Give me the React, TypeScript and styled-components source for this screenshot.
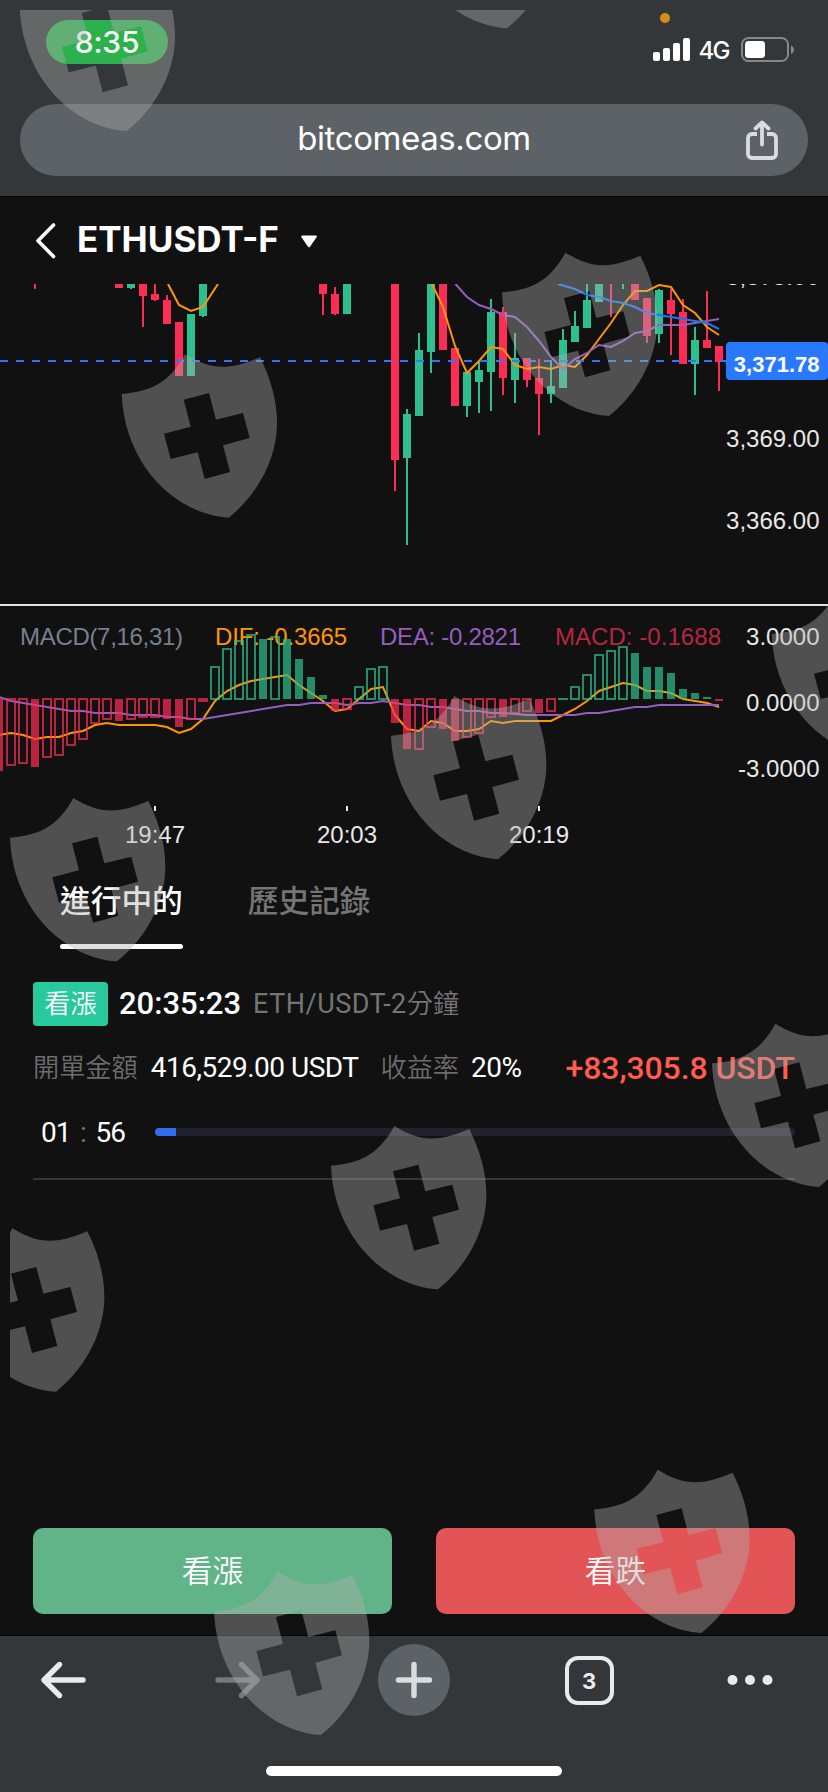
import React from 'react';
import styled, { createGlobalStyle } from 'styled-components';

type Candle = {
  x: number;
  up?: boolean;
  wick?: [number, number];
  body?: [number, number];
};

type Bar = [x: number, up: 0 | 1, hollow: 0 | 1, end: number];

type TextProps = {
  $size?: number;
  $weight?: number;
  $color?: string;
  $spacing?: number;
  $ml?: number;
};

const UP = '#2dc08e';
const DOWN = '#ff2d55';

// top of the visible price pane
const TOP = 284;
const ZERO = 699;

const candles: Candle[] = [
  { x: 35, wick: [TOP, 289] },
  { x: 119, body: [TOP, 288] },
  { x: 131, up: true, wick: [TOP, 289], body: [TOP, 288] },
  { x: 143, wick: [TOP, 327], body: [TOP, 296] },
  { x: 155, wick: [TOP, 301], body: [294, 300] },
  { x: 167, wick: [295, 324], body: [300, 324] },
  { x: 179, body: [322, 376] },
  { x: 191, up: true, body: [314, 376] },
  { x: 203, up: true, wick: [TOP, 317], body: [TOP, 316] },
  { x: 323, wick: [TOP, 315], body: [TOP, 294] },
  { x: 335, wick: [287, 315], body: [294, 314] },
  { x: 347, up: true, body: [TOP, 314] },
  { x: 395, wick: [TOP, 491], body: [TOP, 460] },
  { x: 407, up: true, wick: [409, 545], body: [414, 458] },
  { x: 419, up: true, wick: [333, 416], body: [350, 416] },
  { x: 431, up: true, wick: [TOP, 373], body: [TOP, 352] },
  { x: 443, body: [TOP, 350] },
  { x: 455, body: [348, 406] },
  { x: 467, up: true, wick: [372, 417], body: [372, 406] },
  { x: 479, up: true, wick: [362, 413], body: [370, 382] },
  { x: 491, up: true, wick: [299, 411], body: [312, 372] },
  { x: 503, wick: [307, 395], body: [312, 378] },
  { x: 515, up: true, wick: [333, 403], body: [358, 380] },
  { x: 527, wick: [358, 387], body: [358, 380] },
  { x: 539, wick: [359, 435], body: [378, 394] },
  { x: 551, up: true, wick: [361, 403], body: [386, 394] },
  { x: 563, up: true, wick: [329, 388], body: [340, 388] },
  { x: 575, up: true, wick: [311, 342], body: [326, 342] },
  { x: 587, up: true, wick: [TOP, 328], body: [300, 328] },
  { x: 599, up: true, body: [TOP, 302] },
  { x: 611, wick: [TOP, 317] },
  { x: 623, up: true, wick: [TOP, 289] },
  { x: 635, body: [TOP, 300] },
  { x: 647, wick: [298, 343], body: [298, 336] },
  { x: 659, up: true, wick: [289, 343], body: [290, 334] },
  { x: 671, wick: [289, 355], body: [300, 314] },
  { x: 683, wick: [299, 364], body: [312, 364] },
  { x: 695, up: true, wick: [327, 395], body: [340, 364] },
  { x: 707, wick: [291, 348], body: [340, 348] },
  { x: 719, wick: [346, 391], body: [346, 362] },
];

const bars: Bar[] = [
  [-1, 0, 0, 771], [11, 0, 1, 766], [23, 0, 1, 764], [35, 0, 0, 767],
  [47, 0, 1, 758], [59, 0, 1, 756], [71, 0, 1, 746], [83, 0, 1, 740],
  [95, 0, 1, 724], [107, 0, 1, 720], [119, 0, 0, 721], [131, 0, 1, 720],
  [143, 0, 1, 718], [155, 0, 1, 718], [167, 0, 0, 719], [179, 0, 0, 727],
  [191, 0, 1, 720], [203, 0, 1, 702], [215, 1, 1, 666], [227, 1, 1, 648],
  [239, 1, 1, 640], [251, 1, 1, 634], [263, 1, 0, 639], [275, 1, 1, 636],
  [287, 1, 0, 639], [299, 1, 0, 659], [311, 1, 0, 677], [323, 1, 0, 695],
  [335, 0, 0, 711], [347, 0, 1, 710], [359, 1, 1, 686], [371, 1, 1, 668],
  [383, 1, 1, 666], [395, 0, 0, 723], [407, 0, 0, 749], [419, 0, 1, 750],
  [431, 0, 1, 728], [443, 0, 0, 729], [455, 0, 0, 741], [467, 0, 1, 738],
  [479, 0, 1, 734], [491, 0, 1, 718], [503, 0, 0, 717], [515, 0, 1, 714],
  [527, 0, 1, 712], [539, 0, 0, 713], [551, 0, 1, 712], [563, 1, 1, 698],
  [575, 1, 1, 686], [587, 1, 1, 674], [599, 1, 1, 654], [611, 1, 1, 650],
  [623, 1, 1, 646], [635, 1, 0, 653], [647, 1, 0, 667], [659, 1, 0, 667],
  [671, 1, 0, 673], [683, 1, 0, 689], [695, 1, 0, 693], [707, 1, 0, 697],
  [719, 0, 0, 701],
];

const shields: [number, number][] = [
  [19.7, -32.3], [400, -135], [121.7, 354.3], [502, 252.7],
  [391, 696], [10, 798], [771.7, 594.3], [712, 1023.7],
  [331, 1126], [-51, 1228.3], [214, 1571.7], [594.3, 1469.7],
];

const MacdBar = ({ bar: [x, up, hollow, end] }: { bar: Bar }) => {
  const color = up ? UP : DOWN;
  if (!hollow) {
    return (
      <rect x={x - 4} y={Math.min(ZERO, end)} width="8" height={Math.abs(end - ZERO)} fill={color} />
    );
  }
  // hollow bars are stroked, so they stick out 1px on every side
  const top = up ? end : ZERO - 1;
  const bottom = up ? ZERO + 1 : end;
  if (bottom - top <= 4) {
    return <rect x={x - 5} y={top} width="10" height={bottom - top} fill={color} />;
  }
  return (
    <rect
      x={x - 4}
      y={top + 1}
      width="8"
      height={bottom - top - 2}
      fill="none"
      stroke={color}
      strokeWidth="2"
    />
  );
};

const PriceChart = () => (
  <Chart viewBox="0 284 828 320" height="320">
    {candles.map(({ x, up, wick, body }) => (
      <g key={x} fill={up ? UP : DOWN}>
        {wick && <rect x={x - 1} y={wick[0]} width="2" height={wick[1] - wick[0]} />}
        {body && <rect x={x - 4} y={body[0]} width="8" height={body[1] - body[0]} />}
      </g>
    ))}
    <Line $color="#ff9600" points="168,284 179,305 191,311 203,307 218,284" />
    <Line
      $color="#ff9600"
      points="432,284 443,307 455,346 467,373 479,361 491,347 503,349 515,365 527,369 539,367 551,369 563,365 575,367 587,355 599,339 611,323 623,305 635,291 647,291 659,285 671,287 683,305 695,313 707,327 719,335"
    />
    <Line
      $color="#935ebd"
      points="455.5,284 467,297 479,305 491,309 503,315 515,317 527,327 539,341 551,357 563,369 575,359 587,353 599,345 611,347 623,341 635,333 647,331 659,325 683,325 695,323 707,321 719,319"
    />
    <Line
      $color="#1677ff"
      points="558,284 575,289 587,295 599,297 611,301 623,303 635,307 647,313 659,315 683,319 707,323 719,329"
    />
    <path d="M0 361H726" stroke="#2979ff" strokeWidth="2" strokeDasharray="8 8" />
    <AxisText x="819.5" y="284.6">3,375.00</AxisText>
    <AxisText x="819.5" y="447">3,369.00</AxisText>
    <AxisText x="819.5" y="529">3,366.00</AxisText>
    <rect x="726" y="342" width="102" height="38" rx="4" fill="#2979ff" />
    <PriceText x="819.5" y="371.5">3,371.78</PriceText>
  </Chart>
);

const MacdChart = () => (
  <Chart viewBox="0 606 828 254" height="254">
    <Legend x="20" y="645" fill="#76808f" textLength="163">MACD(7,16,31)</Legend>
    <Legend x="215" y="645" fill="#ff9600" textLength="132">DIF: -0.3665</Legend>
    <Legend x="380" y="645" fill="#935ebd" textLength="141">DEA: -0.2821</Legend>
    <Legend x="555" y="645" fill="#b72640" textLength="166">MACD: -0.1688</Legend>
    <Line
      $color="#ff9600"
      points="-1,735 11,733 23,735 35,739 47,737 59,737 71,733 83,731 95,725 107,723 119,725 155,725 167,727 179,733 191,729 203,719 215,701 227,691 239,685 251,681 263,679 275,677 287,675 299,685 311,693 323,701 335,711 347,709 359,699 371,689 383,687 395,715 407,729 419,731 431,721 443,723 455,731 467,731 479,729 491,721 503,723 515,721 551,721 563,715 575,709 587,701 599,691 611,687 623,683 635,685 647,691 659,691 671,693 683,699 695,701 707,703 719,707"
    />
    <Line
      $color="#935ebd"
      points="-1,697 11,701 23,703 35,705 71,711 83,711 95,713 119,713 131,715 155,715 167,717 179,717 191,719 203,719 287,705 299,705 311,703 335,703 347,705 359,703 371,703 383,701 395,703 407,705 419,705 431,707 443,707 455,709 467,711 479,711 491,713 503,713 527,715 575,715 587,713 599,713 635,707 647,707 659,705 719,705"
    />
    <g opacity="0.7">
      {bars.map((bar) => (
        <MacdBar key={bar[0]} bar={bar} />
      ))}
    </g>
    <AxisText x="819.5" y="645">3.0000</AxisText>
    <AxisText x="819.5" y="711">0.0000</AxisText>
    <AxisText x="819.5" y="777">-3.0000</AxisText>
    <path d="M155 806v5M347 806v5M539 806v5" stroke="#e8e8e8" strokeWidth="2" />
    <TimeText x="155" y="843">19:47</TimeText>
    <TimeText x="347" y="843">20:03</TimeText>
    <TimeText x="539" y="843">20:19</TimeText>
  </Chart>
);

const Shields = () => (
  <ShieldLayer viewBox="10 10 818 1782">
    {shields.map(([x, y]) => (
      <path
        key={`${x}-${y}`}
        transform={`translate(${x} ${y}) scale(0.33333)`}
        fillRule="evenodd"
        d="M0 119C80 112 140 92 190 0C265 45 315 51 415 9C448 75 466 140 466 207C466 300 420 410 321 490C160 480 8 330 0 119Z
          M186 136L262 116L283 196L364 176L384 251L304 273L325 353L249 374L228 294L147 314L127 238L207 217Z"
      />
    ))}
  </ShieldLayer>
);

const StatusIcons = () => (
  <svg width="144" height="54" viewBox="652 10 144 54">
    <circle cx="665" cy="18" r="5" fill="#d88b16" />
    <g fill="#fff">
      <rect x="653" y="52" width="7" height="9" rx="2" />
      <rect x="663" y="48" width="7" height="13" rx="2" />
      <rect x="673" y="43" width="7" height="18" rx="2" />
      <rect x="683" y="38" width="7" height="23" rx="2" />
      <rect x="745" y="41" width="20" height="17" rx="3.5" />
    </g>
    <NetworkText x="698.5" y="59" textLength="32">4G</NetworkText>
    <rect x="742" y="38" width="46" height="23" rx="6.5" fill="none" stroke="#85878a" strokeWidth="2" />
    <path d="M791 45.5c4 1.5 4 7 0 8.5z" fill="#85878a" />
  </svg>
);

const App: React.FC = () => (
  <>
    <GlobalStyle />
    <Screen>
      <BrowserTop>
        <StatusBar>
          <Clock>8:35</Clock>
          <StatusIcons />
        </StatusBar>
        <AddressBar>
          <span />
          <Address>bitcomeas.com</Address>
          <svg width="36" height="44" viewBox="744 119 36 44" fill="none" stroke="#dadce0" strokeWidth="3.8">
            <path d="M757 135h-5a4 4 0 0 0-4 4v16a4 4 0 0 0 4 4h20a4 4 0 0 0 4-4v-16a4 4 0 0 0-4-4h-5" />
            <path d="M762 145.5V124M755.5 129.5L762 123.5L768.5 129.5" strokeLinecap="round" strokeLinejoin="round" />
          </svg>
        </AddressBar>
      </BrowserTop>

      <Header>
        <svg width="24" height="40" viewBox="34 220 24 40" fill="none">
          <path d="M53.5 224L38 239.7L53.5 255.5" stroke="#fff" strokeWidth="3.6" strokeLinecap="round" strokeLinejoin="round" />
        </svg>
        <Title>ETHUSDT-F</Title>
        <svg width="18" height="14" viewBox="300 232 18 14">
          <path d="M302 233.5h14.3q1 .6 .4 1.5L310 244.8q-1 1-2 0L301.3 235q-.4-1 .7-1.5z" fill="#fff" />
        </svg>
      </Header>

      <PriceChart />
      <Separator />
      <MacdChart />

      <Tabs>
        <Tab $active>進行中的</Tab>
        <Tab>歷史記錄</Tab>
      </Tabs>

      <Order>
        <OrderRow $height={46}>
          <Badge>看漲</Badge>
          <Text $size={31} $weight={500} $ml={11} $spacing={0}>20:35:23</Text>
          <Text $size={27} $color="#757575" $ml={12} $spacing={0.5}>ETH/USDT-2</Text>
          <Text $size={26.2} $color="#757575" $weight={350}>分鐘</Text>
        </OrderRow>
        <OrderRow $height={82}>
          <Text $size={26.2} $color="#6c6c6c" $weight={350}>開單金額</Text>
          <Text $size={28} $ml={13} $spacing={-0.5}>416,529.00 USDT</Text>
          <Text $size={26.2} $color="#6c6c6c" $weight={350} $ml={22}>收益率</Text>
          <Text $size={28} $ml={12} $spacing={-0.5}>20%</Text>
          <Profit>+83,305.8 USDT</Profit>
        </OrderRow>
        <OrderRow $height={46}>
          <Countdown>
            <span>01</span>
            <Colon>:</Colon>
            <span>56</span>
          </Countdown>
          <Track>
            <Progress style={{ width: `${(4 / 120) * 100}%` }} />
          </Track>
        </OrderRow>
      </Order>

      <Actions>
        <TradeButton $color="#61b487">看漲</TradeButton>
        <TradeButton $color="#e35457">看跌</TradeButton>
      </Actions>

      <BrowserBottom>
        <Toolbar>
          <ToolIcon viewBox="0 0 46 40" width="46" height="40" $color="#e8eaed">
            <path d="M43 20H4M19.5 4.5L4 20L19.5 35.5" />
          </ToolIcon>
          <ToolIcon viewBox="0 0 46 40" width="46" height="40" $color="#76787b">
            <path d="M3 20H42M26.5 4.5L42 20L26.5 35.5" />
          </ToolIcon>
          <NewTab>
            <ToolIcon viewBox="0 0 40 40" width="40" height="40" $color="#dadce0">
              <path d="M20 4.5V35.5M4.5 20H35.5" />
            </ToolIcon>
          </NewTab>
          <TabCount>3</TabCount>
          <svg width="46" height="12" viewBox="0 0 46 12" fill="#e8eaed">
            <circle cx="5.5" cy="6" r="5" />
            <circle cx="23" cy="6" r="5" />
            <circle cx="40.5" cy="6" r="5" />
          </svg>
        </Toolbar>
        <HomeIndicator />
      </BrowserBottom>

      <Shields />
    </Screen>
  </>
);

export default App;

const GlobalStyle = createGlobalStyle`
  * {
    box-sizing: border-box;
  }

  body {
    margin: 0;
    background: #111;
  }

  svg {
    display: block;
    flex: none;
  }
`;

const Screen = styled.div`
  position: relative;
  display: flex;
  flex-direction: column;
  width: 828px;
  height: 1792px;
  overflow: hidden;
  background: #111;
  color: #fff;
  font-family: Roboto, 'Noto Sans CJK TC', sans-serif;
`;

const BrowserTop = styled.div`
  height: 197px;
  padding: 10px 20px 0;
  background: #33373a;
  border-bottom: 1px solid #000;
`;

const StatusBar = styled.div`
  display: flex;
  justify-content: space-between;
  height: 94px;
  padding: 0 12px 0 26px;
`;

const Clock = styled.div`
  width: 122px;
  height: 44px;
  margin-top: 10px;
  border-radius: 22px;
  background: #2cb14c;
  font: 500 30px/44px Inter, sans-serif;
  letter-spacing: -0.2px;
  text-align: center;
`;

const AddressBar = styled.div`
  display: grid;
  grid-template-columns: 36px 1fr 36px;
  align-items: center;
  height: 72px;
  padding: 0 28px;
  border-radius: 36px;
  background: #5d6266;
`;

const Address = styled.div`
  padding-bottom: 4px;
  font: 400 33px/1 Inter, sans-serif;
  letter-spacing: -0.4px;
  text-align: center;
`;

const Header = styled.div`
  display: flex;
  align-items: center;
  height: 87px;
  padding-left: 34px;
`;

const Title = styled.div`
  margin: 0 21px 0 19px;
  padding-bottom: 2px;
  font: 650 35px/1 Inter, sans-serif;
`;

const Chart = styled.svg`
  width: 828px;
  font-family: 'Liberation Sans', sans-serif;
`;

const Line = styled.polyline<{ $color: string }>`
  fill: none;
  stroke: ${(props) => props.$color};
  stroke-width: 2;
`;

const AxisText = styled.text`
  fill: #e8e8e8;
  font-size: 24px;
  text-anchor: end;
`;

const PriceText = styled(AxisText)`
  fill: #fff;
  font-size: 22px;
  font-weight: 700;
`;

const TimeText = styled(AxisText)`
  text-anchor: middle;
`;

const Legend = styled.text`
  font-size: 24px;
`;

const NetworkText = styled.text`
  fill: #fff;
  font: 500 24px Inter, sans-serif;
`;

const Separator = styled.div`
  flex: none;
  height: 2px;
  background: #e0e0e0;
`;

const Tabs = styled.div`
  display: flex;
  gap: 65px;
  height: 89px;
  padding-left: 60px;
`;

const Tab = styled.div<{ $active?: boolean }>`
  position: relative;
  font-size: 30.7px;
  font-weight: 500;
  line-height: 83px;
  color: ${(props) => (props.$active ? '#fff' : '#757575')};

  &::after {
    content: '';
    display: ${(props) => (props.$active ? 'block' : 'none')};
    position: absolute;
    left: 0;
    bottom: 0;
    width: 100%;
    height: 5px;
    border-radius: 3px;
    background: #fff;
  }
`;

const Order = styled.div`
  height: 199px;
  margin: 32px 33px 0;
  border-bottom: 2px solid #363636;
`;

const OrderRow = styled.div<{ $height: number }>`
  display: flex;
  align-items: center;
  height: ${(props) => props.$height}px;
  white-space: nowrap;
`;

const Text = styled.span<TextProps>`
  margin-left: ${(props) => props.$ml || 0}px;
  font-size: ${(props) => props.$size}px;
  font-weight: ${(props) => props.$weight || 400};
  letter-spacing: ${(props) => props.$spacing || 0}px;
  line-height: 40px;
  color: ${(props) => props.$color || '#fff'};
`;

const Badge = styled.span`
  width: 75px;
  height: 44px;
  border-radius: 4px;
  background: #27c99d;
  font-size: 26.2px;
  font-weight: 350;
  line-height: 45px;
  text-align: center;
`;

const Profit = styled.span`
  margin-left: auto;
  font-size: 32px;
  font-weight: 500;
  letter-spacing: -0.1px;
  color: #ff5c4d;
`;

const Countdown = styled.div`
  display: flex;
  justify-content: space-between;
  width: 84px;
  margin: 0 30px 0 8px;
  font-size: 28px;
  letter-spacing: -1px;
`;

const Colon = styled.span`
  color: #757575;
`;

const Track = styled.div`
  flex: 1;
  height: 8px;
  border-radius: 4px;
  overflow: hidden;
  background: #20232d;
`;

const Progress = styled.div`
  height: 100%;
  background: #2f6fed;
`;

const Actions = styled.div`
  display: grid;
  grid-template-columns: 1fr 1fr;
  gap: 44px;
  margin: auto 33px 21px;
`;

const TradeButton = styled.button<{ $color: string }>`
  height: 86px;
  padding: 0 0 4px;
  border: 0;
  border-radius: 10px;
  background: ${(props) => props.$color};
  color: #fff;
  font: 350 30.7px/82px 'Noto Sans CJK TC', sans-serif;
`;

const BrowserBottom = styled.div`
  flex: none;
  height: 157px;
  background: #33373a;
  border-top: 1px solid #000;
`;

const Toolbar = styled.div`
  display: grid;
  grid-template-columns: 126px 224px 128px 222px 99px;
  align-items: center;
  justify-items: center;
  height: 88px;
`;

const ToolIcon = styled.svg<{ $color: string }>`
  fill: none;
  stroke: ${(props) => props.$color};
  stroke-width: 5.4;
  stroke-linecap: round;
  stroke-linejoin: round;
`;

const NewTab = styled.div`
  display: grid;
  place-items: center;
  width: 72px;
  height: 72px;
  border-radius: 50%;
  background: #5d6266;
`;

const TabCount = styled.div`
  width: 49px;
  height: 49px;
  border: 4px solid #e8eaed;
  border-radius: 13px;
  font: 700 22px/42px Inter, sans-serif;
  text-align: center;
  color: #e8eaed;
`;

const HomeIndicator = styled.div`
  width: 296px;
  height: 10px;
  margin: 42px auto 0;
  border-radius: 5px;
  background: #fff;
`;

// watermark layer over the whole screen, inset from the top left corner
const ShieldLayer = styled.svg`
  position: absolute;
  top: 10px;
  left: 10px;
  width: 818px;
  height: 1782px;
  fill: rgba(175, 175, 175, 0.4);
  pointer-events: none;
`;
